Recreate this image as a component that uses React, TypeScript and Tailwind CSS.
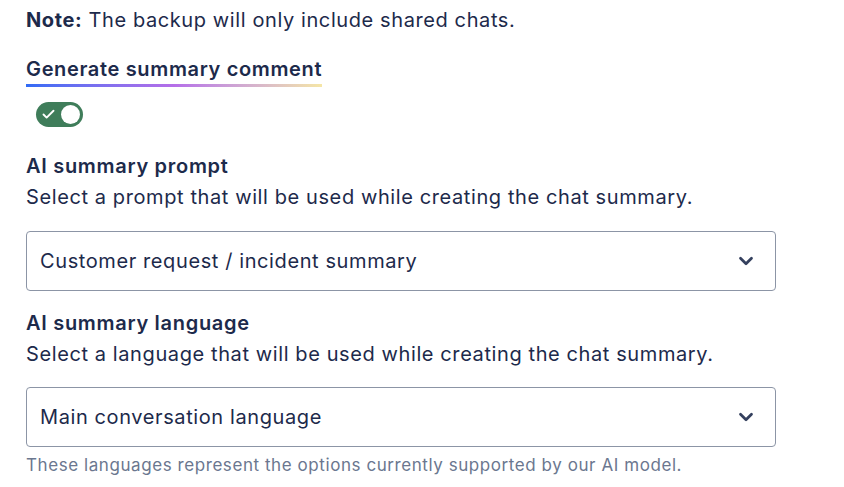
import { ChevronDown, Check } from "lucide-react"

function Select({ value }: { value: string }) {
  return (
    <div className="flex h-[60px] w-[750px] items-center justify-between rounded-[4px] border border-[#8c95a6] bg-white pl-[13px] pr-[18px]">
      <span className="text-[20px] tracking-[0.6px] text-[#1d2a4b]">{value}</span>
      <ChevronDown className="h-[22px] w-[22px] text-[#34405e]" strokeWidth={3} />
    </div>
  )
}

export default function App() {
  return (
    <div className="min-h-[487px] bg-white px-[26px] pt-[6px] font-['Inter',sans-serif] text-[#1d2a4b]">
      <p className="text-[20px] leading-[28px] tracking-[0.6px]">
        <span className="font-bold">Note:</span> The backup will only include shared chats.
      </p>

      <div className="mt-[23px]">
        <div className="inline-block">
          <div className="text-[20px] font-semibold leading-[24px] tracking-[0.65px]">Generate summary comment</div>
          <div className="mt-[3px] h-[3px] bg-gradient-to-r from-[#2f6bf5] via-[#b56ee8] to-[#f5e6a6]" />
        </div>
      </div>

      <div className="mt-[15px] ml-[10px] flex h-[25px] w-[47px] items-center justify-between rounded-full bg-[#3f7d5a] pl-[5px] pr-[3px]">
        <Check className="h-[15px] w-[15px] text-white" strokeWidth={3} />
        <div className="h-[19px] w-[19px] rounded-full bg-white" />
      </div>

      <div className="mt-[25px] text-[20px] font-semibold leading-[28px] tracking-[0.7px]">AI summary prompt</div>
      <div className="mt-[3px] text-[20px] leading-[28px] tracking-[0.6px]">
        Select a prompt that will be used while creating the chat summary.
      </div>
      <div className="mt-[20px]">
        <Select value="Customer request / incident summary" />
      </div>

      <div className="mt-[18px] text-[20px] font-semibold leading-[28px] tracking-[0.7px]">AI summary language</div>
      <div className="mt-[3px] text-[20px] leading-[28px] tracking-[0.6px]">
        Select a language that will be used while creating the chat summary.
      </div>
      <div className="mt-[19px]">
        <Select value="Main conversation language" />
      </div>
      <p className="mt-[6px] text-[17px] leading-[24px] tracking-[0.57px] text-[#6b778f]">
        These languages represent the options currently supported by our AI model.
      </p>
    </div>
  )
}
